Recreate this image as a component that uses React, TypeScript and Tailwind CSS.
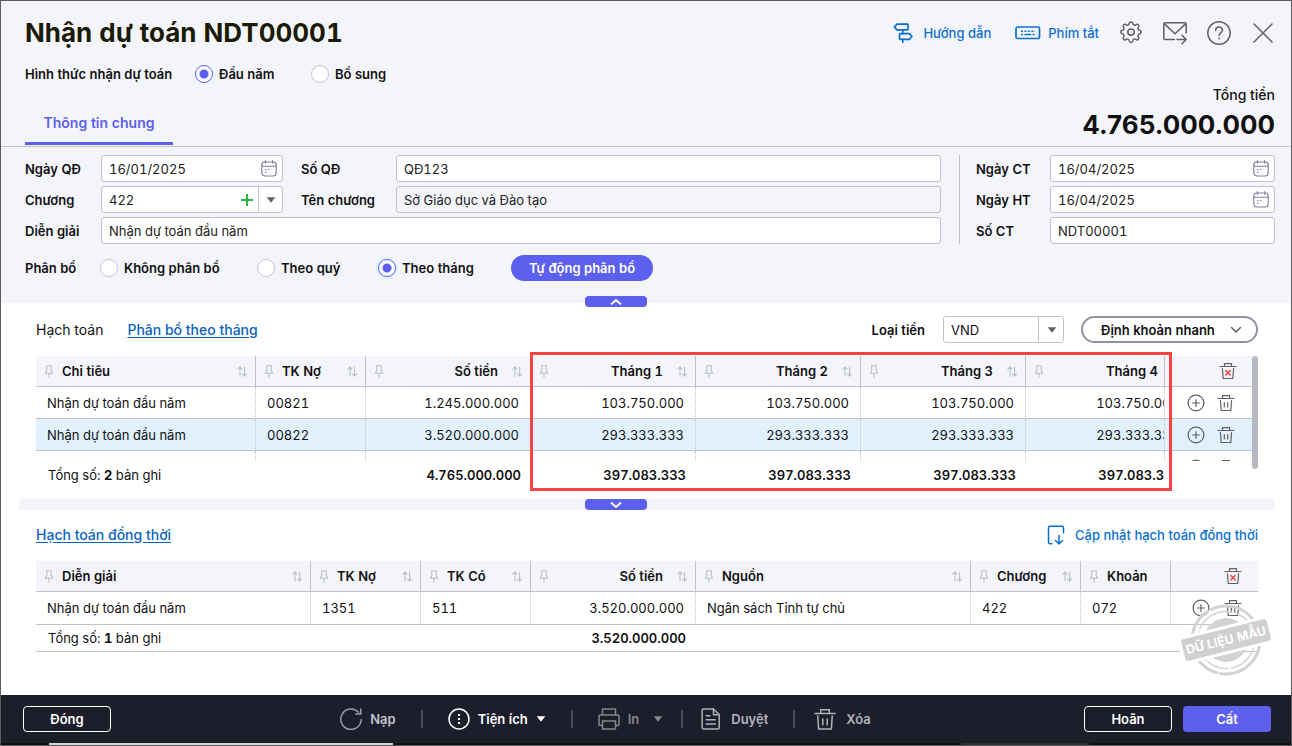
import React, { useState } from 'react';

type Column = {
  label: string;
  width?: string;
  align?: 'right';
  sortable?: boolean;
};

const months = ['Tháng 1', 'Tháng 2', 'Tháng 3', 'Tháng 4'];

const allocationColumns: Column[] = [
  { label: 'Chỉ tiêu', sortable: true },
  { label: 'TK Nợ', width: 'w-[110px]', sortable: true },
  { label: 'Số tiền', width: 'w-[165px]', align: 'right', sortable: true },
  ...months.map((m): Column => ({ label: m, width: 'w-[165px]', align: 'right', sortable: true })),
];

const allocationRows = [
  { target: 'Nhận dự toán đầu năm', account: '00821', amount: '1.245.000.000', monthly: '103.750.000' },
  { target: 'Nhận dự toán đầu năm', account: '00822', amount: '3.520.000.000', monthly: '293.333.333' },
];

const entryColumns: Column[] = [
  { label: 'Diễn giải', width: 'w-[275px]', sortable: true },
  { label: 'TK Nợ', width: 'w-[110px]', sortable: true },
  { label: 'TK Có', width: 'w-[110px]', sortable: true },
  { label: 'Số tiền', width: 'w-[165px]', align: 'right', sortable: true },
  { label: 'Nguồn', sortable: true },
  { label: 'Chương', width: 'w-[110px]', sortable: true },
  { label: 'Khoản', width: 'w-[90px]' },
];

const entryRow = ['Nhận dự toán đầu năm', '1351', '511', '3.520.000.000', 'Ngân sách Tỉnh tự chủ', '422', '072'];

/* ---------- Icons ---------- */

const Svg = ({ w, h, className, children }: { w: number; h: number; className?: string; children: React.ReactNode }) => (
  <svg
    width={w}
    height={h}
    viewBox={`0 0 ${w} ${h}`}
    fill="none"
    stroke="currentColor"
    strokeWidth="1.5"
    strokeLinecap="round"
    strokeLinejoin="round"
    aria-hidden="true"
    className={`shrink-0 ${className ?? ''}`}
  >
    {children}
  </svg>
);

const SignpostIcon = () => (
  <Svg w={20} h={20}>
    <g strokeWidth="1.7">
      <path d="M4 1.2h10.500a.5.5 0 0 1 .5.5v4.600a.5.5 0 0 1-.5.5H4L1.300 4z" />
      <path d="M7.500 10.700h8.800L19 13.500l-2.700 2.800H7.500a1 1 0 0 1-1-1v-3.600a1 1 0 0 1 1-1z" />
      <path d="M9.800 6.800v3.900M9.800 16.300v3" />
    </g>
  </Svg>
);

const KeyboardIcon = () => (
  <Svg w={26} h={14}>
    <rect x="1" y="1" width="23.500" height="11.500" rx="1.800" strokeWidth="1.700" />
    <path strokeLinecap="butt" strokeDasharray="2 1.400" d="M6 5.200h14M6 8.500h2" />
    <path strokeLinecap="butt" d="M9.500 8.500h6.500M17.500 8.500h2" />
  </Svg>
);

const GearIcon = () => (
  <Svg w={24} h={24}>
    <path d="M10.100 2.700c.3-2.300 3.500-2.300 3.800 0 .2 1.300 1.700 1.900 2.800 1.100 1.900-1.500 4.100.7 2.600 2.600-.8 1.100-.2 2.600 1.100 2.800 2.500.3 2.500 3.500 0 3.800-1.300.2-1.900 1.700-1.100 2.800 1.500 1.900-.7 4.100-2.600 2.600-1.100-.8-2.600-.2-2.800 1.100-.3 2.500-3.500 2.500-3.800 0-.2-1.300-1.700-1.900-2.800-1.100-1.900 1.500-4.100-.7-2.600-2.600.8-1.100.2-2.600-1.100-2.800-2.500-.3-2.500-3.500 0-3.800 1.300-.2 1.900-1.700 1.100-2.800-1.500-1.900.7-4.100 2.600-2.600 1.100.8 2.600.2 2.800-1.100z" />
    <circle cx="12" cy="11.100" r="3.200" />
  </Svg>
);

const MailIcon = () => (
  <Svg w={24} h={24}>
    <path d="M11.500 18.500H2.200A1.400 1.400 0 0 1 .8 17.100V3.200a1.400 1.400 0 0 1 1.400-1.400h19.600a1.400 1.400 0 0 1 1.400 1.400V12" />
    <path d="M1.200 2.600 12 12.800 22.800 2.600M14 18.500h9.200M19 14.300l4.200 4.200-4.200 4.200" />
  </Svg>
);

const HelpIcon = () => (
  <Svg w={24} h={24}>
    <circle cx="12" cy="12" r="11.200" />
    <path d="M8.700 9.400c0-4.400 6.800-4.400 6.800-.2 0 2.500-3.400 2.400-3.400 5.300" />
    <path strokeWidth="1.800" d="M12.100 17.500v.1" />
  </Svg>
);

const CloseIcon = () => (
  <Svg w={24} h={24}>
    <path d="M3 3l18 18M21 3 3 21" />
  </Svg>
);

const CalendarIcon = () => (
  <Svg w={16} h={17} className="text-[#7c7f9e]">
    <g strokeWidth="1.100">
      <rect x=".8" y="2" width="14.400" height="14" rx="3" />
      <path d="M1 6.300h14M4.300.6v2.600M11.700.6v2.600" />
    </g>
    <path strokeWidth="1.200" strokeLinecap="butt" d="M4.300 9.500h1.300M7 9.500h1.300M4.300 12.300h1.300" />
  </Svg>
);

const PinIcon = () => (
  <Svg w={10} h={13}>
    <path strokeWidth="1.100" d="M2.500.8h5M2.800.8v4.700L1.300 8.300h7.400L7.200 5.500V.8M5 8.300v4" />
  </Svg>
);

const SortIcon = () => (
  <Svg w={10} h={11}>
    <path strokeWidth="1.100" d="M3 10V1M.8 3.100 3 .9l2 2.200M7.600 1v9M5.500 7.900l2.100 2.200 2-2.200" />
  </Svg>
);

const TrashIcon = () => (
  <Svg w={18} h={18}>
    <path strokeWidth="1.200" d="M1 4.500h16M5.500 4.500V1.600h7v2.900M3.400 6.500l.8 10h9.600l.8-10M7.300 8.500v4.500M10.700 8.500v4.500" />
  </Svg>
);

const TrashAllIcon = () => (
  <Svg w={18} h={18}>
    <path strokeWidth="1.200" d="M1 4.500h16M5.500 4.500V1.600h7v2.900M3.400 6.500l.8 10h9.600l.8-10" />
    <path stroke="#f23b3b" strokeWidth="1.400" d="M6.800 8.500l4.400 4.400M11.200 8.500l-4.400 4.400" />
  </Svg>
);

const AddIcon = () => (
  <Svg w={18} h={18}>
    <g strokeWidth="1.200">
      <circle cx="9" cy="9" r="7.900" />
      <path d="M5.500 9h7M9 5.500v7" />
    </g>
  </Svg>
);

const UpdateIcon = () => (
  <Svg w={18} h={20}>
    <path d="M5 18.800H3a1.500 1.500 0 0 1-1.500-1.500V2.700A1.500 1.500 0 0 1 3 1.200h12a1.500 1.500 0 0 1 1.500 1.500v5" />
    <path d="M12 10.500v8.300M8.500 15.500l3.500 3.500 3.500-3.500" />
  </Svg>
);

const RefreshIcon = () => (
  <Svg w={22} h={22}>
    <path d="M21.200 11.500A10.200 10.200 0 1 1 18.500 4.300M20.800 1v5h-5" />
  </Svg>
);

const MoreIcon = () => (
  <Svg w={22} h={22}>
    <circle cx="11" cy="11" r="10" />
    <path strokeWidth="2" strokeLinecap="butt" d="M11 6v2M11 10v2M11 14v2" />
  </Svg>
);

const PrinterIcon = () => (
  <Svg w={22} h={22}>
    <path d="M4.500 7V1h13v6M4.500 17.500H2.300A1.300 1.300 0 0 1 1 16.200V8.500A1.500 1.500 0 0 1 2.500 7h17A1.500 1.500 0 0 1 21 8.500v7.700a1.300 1.300 0 0 1-1.300 1.300h-2.200M4.500 13h13v8h-13z" />
  </Svg>
);

const DocumentIcon = () => (
  <Svg w={20} h={22}>
    <path d="M2.500 1h10l5.700 5.700v13a1.300 1.300 0 0 1-1.300 1.300H2.500a1.300 1.300 0 0 1-1.300-1.300V2.300A1.300 1.300 0 0 1 2.500 1z" />
    <path d="M12.500 1v5.700h5.700M5.300 7.700h3.500M5.300 11.800h9M5.300 16h9" />
  </Svg>
);

const BigTrashIcon = () => (
  <Svg w={22} h={22}>
    <path d="M1 5.500h20M6.700 5.500V1.700h8.600v3.800M3.800 8l.8 13h12.800l.8-13M8.800 11v6M13.200 11v6" />
  </Svg>
);

const Caret = ({ className }: { className?: string }) => (
  <svg width="10" height="6" viewBox="0 0 10 6" aria-hidden="true" className={`shrink-0 fill-current ${className ?? ''}`}>
    <path d="M.7.300h8.600L5 5.800z" />
  </svg>
);

const SampleStamp = () => (
  <svg width="92" height="76" viewBox="0 0 92 76" role="img" aria-label="Dữ liệu mẫu" className="pointer-events-none absolute top-[41px] right-[17px]">
    <g stroke="#d3d3d3" fill="none">
      <circle cx="46" cy="38" r="34" strokeWidth="3" strokeDasharray="60 1 35 2 44 1" />
      <circle cx="46" cy="38" r="28.500" strokeWidth="1.500" strokeDasharray="40 2 22 1 33 2" />
    </g>
    <circle cx="46" cy="38" r="22" fill="#d3d3d3" />
    <g transform="rotate(-14 46 38)">
      <rect x="-2" y="24" width="96" height="28" fill="#fff" />
      <rect x="2" y="27" width="88" height="22" rx="2.500" fill="#d0d0d0" />
      <text x="46" y="42.500" textAnchor="middle" fontSize="12.500" fontWeight="700" fill="#fff">
        DỮ LIỆU MẪU
      </text>
    </g>
  </svg>
);

/* ---------- Form controls ---------- */

const Radio = ({ name, label, value, current, onChange, className }: {
  name: string;
  label: string;
  value: string;
  current: string;
  onChange: (v: string) => void;
  className?: string;
}) => (
  <label className={`flex items-center gap-[6px] font-semibold ${className ?? ''}`}>
    <input
      type="radio"
      name={name}
      checked={current === value}
      onChange={() => onChange(value)}
      className="size-[18px] appearance-none rounded-full border border-[#c5c7d3] bg-white checked:border-[#5d5fef] checked:bg-[radial-gradient(circle,#5d5fef_4px,#fff_5px)]"
    />
    {label}
  </label>
);

const Field = ({ id, label, value, date, readOnly, className }: {
  id: string;
  label: string;
  value: string;
  date?: boolean;
  readOnly?: boolean;
  className?: string;
}) => (
  <>
    <label htmlFor={id} className="font-semibold">{label}</label>
    <div className={`flex h-[27px] items-center rounded-[3px] border border-[#bfc1cd] ${readOnly ? 'bg-[#f4f5fa]' : 'bg-white'} ${className ?? ''}`}>
      <input id={id} type="text" defaultValue={value} readOnly={readOnly} className="h-full w-full min-w-0 px-[7px] text-[#212121] outline-none" />
      {date && (
        <button type="button" aria-label={`Chọn ${label}`} className="mr-[5px]">
          <CalendarIcon />
        </button>
      )}
    </div>
  </>
);

const HeaderCell = ({ col }: { col: Column }) => (
  <th scope="col" className={`h-[31px] border-r border-b border-[#bfc1cd] bg-[#f4f5fa] px-2 font-semibold ${col.width ?? ''}`}>
    <div className="flex items-center text-[#bbbdc9]">
      <PinIcon />
      <span className={`ml-2 flex-1 whitespace-nowrap text-[#111] ${col.align === 'right' ? 'mr-[14px] text-right' : 'text-left'}`}>
        {col.label}
      </span>
      {col.sortable && <SortIcon />}
    </div>
  </th>
);

const RowActions = ({ className }: { className?: string }) => (
  <div className={`flex text-[#616161] ${className ?? ''}`}>
    <button type="button" aria-label="Thêm dòng"><AddIcon /></button>
    <button type="button" aria-label="Xóa dòng"><TrashIcon /></button>
  </div>
);

const ToggleButton = ({ up, label, className }: { up?: boolean; label: string; className: string }) => (
  <button type="button" aria-label={label} className={`absolute left-[584px] flex h-[11px] w-[62px] items-center justify-center rounded bg-[#5d5fef] text-white ${className}`}>
    <Svg w={12} h={8}>
      <path strokeWidth="1.800" d={up ? 'M1.500 6 6 2l4.500 4' : 'M1.500 2 6 6l4.500-4'} />
    </Svg>
  </button>
);

const Divider = () => <span className="h-[18px] w-[2px] bg-[#4a4b59]" />;

/* ---------- Page ---------- */

const App = () => {
  const [receiveType, setReceiveType] = useState('dau-nam');
  const [allocation, setAllocation] = useState('thang');

  return (
    <div className="flex min-h-screen flex-col border border-[#5c5b5e] bg-white font-['Inter',sans-serif] text-[13px] leading-5 text-[#111] tabular-nums">
      <header className="flex justify-between border-b border-[#bfc1cd] bg-[#f4f5fa] pt-3 pr-4 pb-px pl-6">
        <div>
          <h1 className="text-[26px] leading-10 font-bold text-[#1b1b05]">Nhận dự toán NDT00001</h1>
          <div className="mt-[10px] flex h-[22px] items-center">
            <span className="w-[170px] font-semibold">Hình thức nhận dự toán</span>
            <Radio name="receive" label="Đầu năm" value="dau-nam" current={receiveType} onChange={setReceiveType} className="w-[116px]" />
            <Radio name="receive" label="Bổ sung" value="bo-sung" current={receiveType} onChange={setReceiveType} />
          </div>
          <nav className="mt-[22px] flex">
            <button type="button" className="w-[148px] border-b-[3px] border-[#5d5fef] pb-[3px] text-sm leading-8 font-semibold text-[#5d5fef]">
              Thông tin chung
            </button>
          </nav>
        </div>
        <div className="flex flex-col items-end">
          <div className="flex h-10 items-center gap-5 text-[#616161]">
            <a href="#huong-dan" className="mr-1 flex items-center gap-[10px] font-medium text-[#0b70d0]">
              <SignpostIcon />
              Hướng dẫn
            </a>
            <a href="#phim-tat" className="flex items-center gap-[7px] font-medium text-[#0b70d0]">
              <KeyboardIcon />
              Phím tắt
            </a>
            <button type="button" aria-label="Thiết lập"><GearIcon /></button>
            <button type="button" aria-label="Gửi email"><MailIcon /></button>
            <button type="button" aria-label="Trợ giúp"><HelpIcon /></button>
            <button type="button" aria-label="Đóng cửa sổ"><CloseIcon /></button>
          </div>
          <span className="mt-8 text-sm font-medium">Tổng tiền</span>
          <strong className="text-[26px] leading-10 font-bold normal-nums">4.765.000.000</strong>
        </div>
      </header>

      <section className="relative bg-[#f4f5fa] pt-2 pr-4 pb-[22px] pl-6">
        <div className="flex">
          <div className="grid flex-1 grid-cols-[76px_182px_113px_1fr] items-center gap-y-1">
            <Field id="ngay-qd" label="Ngày QĐ" value="16/01/2025" date />
            <div className="contents [&>label]:pl-[18px]">
              <Field id="so-qd" label="Số QĐ" value="QĐ123" />
            </div>
            <label htmlFor="chuong" className="font-semibold">Chương</label>
            <div className="flex h-[27px] items-center rounded-[3px] border border-[#bfc1cd] bg-white">
              <input id="chuong" type="text" defaultValue="422" className="h-full w-full min-w-0 px-[7px] text-[#212121] outline-none" />
              <button type="button" aria-label="Thêm chương" className="mr-1 text-[#2fb543]">
                <Svg w={14} h={14}>
                  <path strokeLinecap="butt" strokeWidth="2" d="M7 1v12M1 7h12" />
                </Svg>
              </button>
              <button type="button" aria-label="Chọn chương" className="flex h-full w-6 shrink-0 items-center justify-center border-l border-[#bfc1cd] text-[#616161]">
                <Caret />
              </button>
            </div>
            <div className="contents [&>label]:pl-[18px]">
              <Field id="ten-chuong" label="Tên chương" value="Sở Giáo dục và Đào tạo" readOnly />
            </div>
            <Field id="dien-giai" label="Diễn giải" value="Nhận dự toán đầu năm" className="col-span-3" />
          </div>
          <div className="ml-[18px] grid w-[316px] grid-cols-[74px_1fr] items-center gap-y-1 border-l border-[#bfc1cd] pl-4">
            <Field id="ngay-ct" label="Ngày CT" value="16/04/2025" date />
            <Field id="ngay-ht" label="Ngày HT" value="16/04/2025" date />
            <Field id="so-ct" label="Số CT" value="NDT00001" />
          </div>
        </div>
        <div className="mt-[11px] flex items-center">
          <span className="w-[75px] font-semibold">Phân bổ</span>
          <Radio name="allocation" label="Không phân bổ" value="khong" current={allocation} onChange={setAllocation} className="w-[157px]" />
          <Radio name="allocation" label="Theo quý" value="quy" current={allocation} onChange={setAllocation} className="w-[121px]" />
          <Radio
            name="allocation"
            label="Theo tháng"
            value="thang"
            current={allocation}
            onChange={setAllocation}
            className="w-[133px] [&>input:checked]:ring-2 [&>input:checked]:ring-[#dfeefc]"
          />
          <button type="button" className="h-[26px] w-[142px] rounded-full bg-[#5d5fef] font-semibold text-white">Tự động phân bổ</button>
        </div>
        <ToggleButton up label="Thu gọn thông tin chung" className="-bottom-1" />
      </section>

      <main className="flex-1">
        <section>
          <div className="flex h-[53px] items-center pr-[33px] pl-[35px]">
            <button type="button" className="mr-6 text-sm">Hạch toán</button>
            <a href="#phan-bo" className="text-sm font-medium text-[#0b63c0] underline underline-offset-2">Phân bổ theo tháng</a>
            <label htmlFor="loai-tien" className="mr-[18px] ml-auto font-semibold">Loại tiền</label>
            <div className="relative mr-[17px]">
              <select id="loai-tien" defaultValue="VND" className="h-[27px] w-[121px] appearance-none rounded-[3px] border border-[#bfc1cd] bg-white px-[7px] outline-none">
                <option>VND</option>
              </select>
              <span className="pointer-events-none absolute inset-y-0 right-0 flex w-[26px] items-center justify-center border-l border-[#bfc1cd] text-[#616161]">
                <Caret />
              </span>
            </div>
            <button type="button" className="flex h-[27px] w-[177px] items-center justify-between rounded-full border-2 border-[#8f92a5] pr-[14px] pl-[18px] font-semibold">
              Định khoản nhanh
              <Svg w={12} h={8} className="text-[#616161]">
                <path d="M1.500 1.500 6 6l4.500-4.500" />
              </Svg>
            </button>
          </div>

          <div className="relative mr-[33px] ml-[35px] flex items-start">
            <div className="min-w-0 flex-1 overflow-hidden">
              <table className="w-full min-w-[1243px] table-fixed border-separate border-spacing-0">
                <thead>
                  <tr>
                    {allocationColumns.map((col) => <HeaderCell key={col.label} col={col} />)}
                    <th className="sticky right-0 w-[88px] border-b border-l border-[#bfc1cd] bg-[#f4f5fa]">
                      <button type="button" aria-label="Xóa tất cả dòng hạch toán" className="ml-[54px] block text-[#616161]">
                        <TrashAllIcon />
                      </button>
                    </th>
                  </tr>
                </thead>
                <tbody>
                  {allocationRows.map((row, i) => (
                    <tr
                      key={row.account}
                      className={`[&>td]:h-8 [&>td]:border-b [&>td]:border-b-[#bfc1cd] ${i === 1 ? '[&>td]:bg-[#e1f1fe]' : '[&>td]:bg-white'}`}
                    >
                      <td className="border-r border-r-[#bfc1cd] px-[11px] [border-right-style:dotted]">{row.target}</td>
                      <td className="border-r border-r-[#bfc1cd] px-[11px] [border-right-style:dotted]">{row.account}</td>
                      <td className="border-r border-r-[#bfc1cd] px-[11px] text-right [border-right-style:dotted]">{row.amount}</td>
                      {months.map((m) => (
                        <td key={m} className="border-r border-r-[#bfc1cd] px-[11px] text-right [border-right-style:dotted]">{row.monthly}</td>
                      ))}
                      <td className="sticky right-0 border-l border-l-[#bfc1cd] [border-left-style:dotted]">
                        <RowActions className="ml-[22px] gap-3" />
                      </td>
                    </tr>
                  ))}
                  <tr>
                    {allocationColumns.map((col) => (
                      <td key={col.label} className="h-[10px] border-r border-dotted border-[#bfc1cd]" />
                    ))}
                    <td className="sticky right-0 border-l border-dotted border-[#bfc1cd] bg-white">
                      <div className="h-[10px] overflow-hidden pt-2">
                        <RowActions className="ml-[22px] gap-3" />
                      </div>
                    </td>
                  </tr>
                </tbody>
                <tfoot>
                  <tr>
                    <td colSpan={2} className="h-7 px-3">Tổng số: <b className="font-bold">2</b> bản ghi</td>
                    <td className="px-[10px] text-right font-semibold">4.765.000.000</td>
                    {months.map((m) => (
                      <td key={m} className="px-[10px] text-right font-semibold">397.083.333</td>
                    ))}
                    <td className="sticky right-0 bg-white" />
                  </tr>
                </tfoot>
              </table>
            </div>
            <div className="h-[113px] w-[6px] shrink-0 rounded-full bg-[#b6b9c1]" />
            <div className="pointer-events-none absolute -top-1 -bottom-[2px] left-[494px] w-[642px] border-[3px] border-[#f84343]" />
          </div>

          <div className="relative mt-[10px]">
            <div className="mr-4 ml-[18px] h-[11px] rounded-[3px] bg-[#f4f5fa]" />
            <ToggleButton label="Mở rộng bảng hạch toán" className="top-0" />
          </div>
        </section>

        <section className="mr-[33px] ml-[35px]">
          <div className="flex h-[51px] items-center justify-between pb-[2px]">
            <a href="#hach-toan-dong-thoi" className="text-sm font-medium text-[#0b63c0] underline underline-offset-2">Hạch toán đồng thời</a>
            <button type="button" className="flex items-center gap-[10px] font-medium text-[#0b70d0]">
              <UpdateIcon />
              Cập nhật hạch toán đồng thời
            </button>
          </div>
          <div className="relative">
            <table className="w-full table-fixed border-separate border-spacing-0">
              <thead>
                <tr>
                  {entryColumns.map((col) => <HeaderCell key={col.label} col={col} />)}
                  <th className="w-[87px] border-b border-[#bfc1cd] bg-[#f4f5fa]">
                    <button type="button" aria-label="Xóa tất cả dòng đồng thời" className="ml-[53px] block text-[#616161]">
                      <TrashAllIcon />
                    </button>
                  </th>
                </tr>
              </thead>
              <tbody>
                <tr className="[&>td]:h-[33px] [&>td]:border-b [&>td]:border-b-[#bfc1cd]">
                  {entryRow.map((text, i) => (
                    <td key={entryColumns[i].label} className={`border-r border-r-[#bfc1cd] px-[11px] [border-right-style:dotted] ${i === 3 ? 'text-right' : ''}`}>
                      {text}
                    </td>
                  ))}
                  <td>
                    <RowActions className="ml-[21px] gap-[14px]" />
                  </td>
                </tr>
              </tbody>
              <tfoot>
                <tr className="[&>td]:h-[27px] [&>td]:border-b [&>td]:border-[#bfc1cd]">
                  <td colSpan={3} className="px-3">Tổng số: <b className="font-bold">1</b> bản ghi</td>
                  <td className="px-[10px] text-right font-semibold">3.520.000.000</td>
                  <td colSpan={4} />
                </tr>
              </tfoot>
            </table>
            <div className="absolute top-0 -right-[31px]">
              <SampleStamp />
            </div>
          </div>
        </section>
      </main>

      <footer>
        <div className="flex h-12 items-center justify-between bg-[#1d1e2c] pr-5 pl-[22px] font-semibold">
          <button type="button" className="h-[26px] w-[88px] rounded border border-white text-white">Đóng</button>
          <div className="ml-4 flex items-center text-[#b1b2bb]">
            <button type="button" className="flex items-center gap-2 text-[#9a9ba6]">
              <RefreshIcon />
              <span className="text-[#c3c4cc]">Nạp</span>
            </button>
            <span className="mx-[25px] flex"><Divider /></span>
            <button type="button" className="flex items-center gap-2 text-white">
              <MoreIcon />
              <span>Tiện ích</span>
              <Caret />
            </button>
            <span className="mx-[25px] flex"><Divider /></span>
            <button type="button" className="flex items-center gap-2 text-[#85868f]">
              <PrinterIcon />
              <span>In</span>
              <Caret className="ml-[6px]" />
            </button>
            <span className="mx-[18px] flex"><Divider /></span>
            <button type="button" className="flex items-center gap-[10px]">
              <DocumentIcon />
              Duyệt
            </button>
            <span className="mr-[19px] ml-[25px] flex"><Divider /></span>
            <button type="button" className="flex items-center gap-[10px]">
              <BigTrashIcon />
              Xóa
            </button>
          </div>
          <div className="flex gap-[11px]">
            <button type="button" className="h-[26px] w-[88px] rounded border border-white text-white">Hoãn</button>
            <button type="button" className="h-[26px] w-[88px] rounded bg-[#5d5fef] text-white">Cất</button>
          </div>
        </div>
        <div className="flex h-[2px] bg-[#101014]">
          <div className="ml-12 w-[344px] bg-[#d6d6d6]" />
          <div className="mr-[202px] ml-auto w-32 bg-[#2f2f33]" />
        </div>
      </footer>
    </div>
  );
};

export default App;
